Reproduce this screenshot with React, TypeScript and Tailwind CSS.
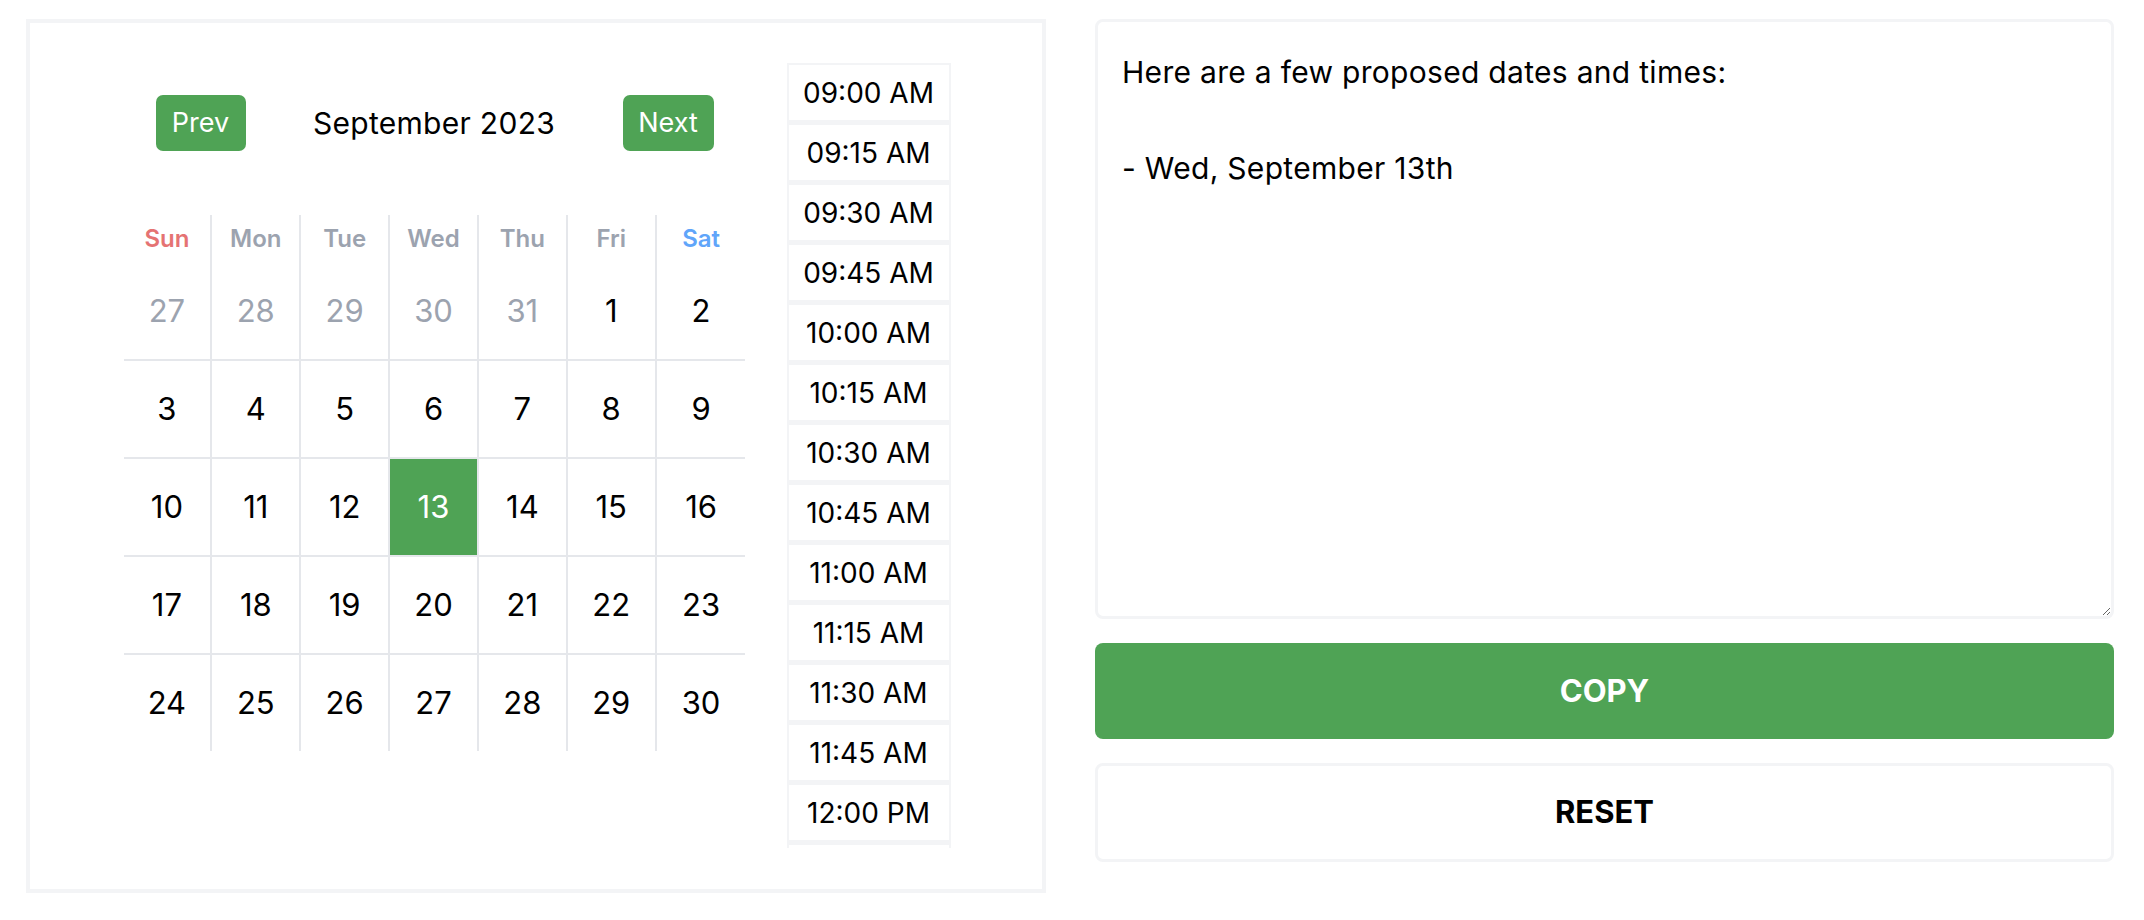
import React from "react";

const weeks: { d: number; muted?: boolean }[][] = [
  [
    { d: 27, muted: true },
    { d: 28, muted: true },
    { d: 29, muted: true },
    { d: 30, muted: true },
    { d: 31, muted: true },
    { d: 1 },
    { d: 2 },
  ],
  [3, 4, 5, 6, 7, 8, 9].map((d) => ({ d })),
  [10, 11, 12, 13, 14, 15, 16].map((d) => ({ d })),
  [17, 18, 19, 20, 21, 22, 23].map((d) => ({ d })),
  [24, 25, 26, 27, 28, 29, 30].map((d) => ({ d })),
];

const dayNames = ["Sun", "Mon", "Tue", "Wed", "Thu", "Fri", "Sat"];

const times = [
  "09:00 AM",
  "09:15 AM",
  "09:30 AM",
  "09:45 AM",
  "10:00 AM",
  "10:15 AM",
  "10:30 AM",
  "10:45 AM",
  "11:00 AM",
  "11:15 AM",
  "11:30 AM",
  "11:45 AM",
  "12:00 PM",
  "12:15 PM",
];

export default function App() {
  return (
    <div className="min-h-[920px] w-full bg-white text-black [font-family:Inter,'Noto_Sans',sans-serif]">
      <div className="flex gap-[49px] pl-[26px] pt-[19px]">
        {/* Left panel */}
        <div className="w-[1020px] shrink-0 h-[874px] border-4 border-[#f3f4f6] flex justify-center items-start gap-[41px] pl-[2px] py-[40px]">
          <div className="w-[622px] pt-[32px]">
            <div className="flex items-center justify-between px-[32px] h-[56px]">
              <button className="w-[90px] h-[56px] rounded-[7px] bg-[#4fa355] text-white text-[27px] flex items-center justify-center">
                Prev
              </button>
              <div className="text-[30px] tracking-[0.3px]">September 2023</div>
              <button className="w-[91px] h-[56px] rounded-[7px] bg-[#4fa355] text-white text-[27px] flex items-center justify-center">
                Next
              </button>
            </div>
            <div className="mt-[64px] grid grid-cols-7">
              {dayNames.map((n, i) => (
                <div
                  key={n}
                  className={
                    "h-[48px] flex items-center justify-center text-[24px] font-semibold " +
                    (i < 6 ? "border-r-2 border-[#e5e7eb] " : "") +
                    (i === 0
                      ? "text-[#e57373]"
                      : i === 6
                      ? "text-[#60a5fa]"
                      : "text-[#9ca3af]")
                  }
                >
                  {n}
                </div>
              ))}
              {weeks.map((week, wi) =>
                week.map((c, ci) => {
                  const selected = wi === 2 && c.d === 13;
                  return (
                    <div
                      key={wi + "-" + ci}
                      className={
                        "flex items-center justify-center text-[31px] border-[#e5e7eb] " +
                        (wi < 4 ? "h-[98px] border-b-2 " : "h-[96px] ") +
                        (ci < 6 ? "border-r-2 " : "") +
                        (selected
                          ? "bg-[#4fa355] text-white"
                          : c.muted
                          ? "text-[#9ca3af]"
                          : "text-black")
                      }
                    >
                      {c.d}
                    </div>
                  );
                })
              )}
            </div>
          </div>
          <div className="w-[164px] h-[785px] overflow-hidden flex flex-col">
            {times.map((t) => (
              <div
                key={t}
                className="shrink-0 h-[60px] border-x-2 border-t-2 border-b-[3px] border-[#f3f4f6] flex items-center justify-center text-[28px]"
              >
                {t}
              </div>
            ))}
          </div>
        </div>

        {/* Right column */}
        <div className="w-[1019px] shrink-0 flex flex-col gap-[24px]">
          <textarea
            className="w-full h-[600px] border-[3px] border-[#f3f4f6] rounded-lg px-[24px] pt-[26px] pb-[24px] text-[30px] tracking-[0.3px] leading-[48px] text-black outline-none [font-family:Inter,'Noto_Sans',sans-serif]"
            defaultValue={"Here are a few proposed dates and times:\n\n- Wed, September 13th"}
          />
          <button className="w-full h-[96px] rounded-lg bg-[#4fa355] text-white text-[31px] font-bold flex items-center justify-center">
            COPY
          </button>
          <button className="w-full h-[99px] rounded-lg bg-white border-[3px] border-[#f3f4f6] text-black text-[31px] font-bold flex items-center justify-center">
            RESET
          </button>
        </div>
      </div>
    </div>
  );
}
